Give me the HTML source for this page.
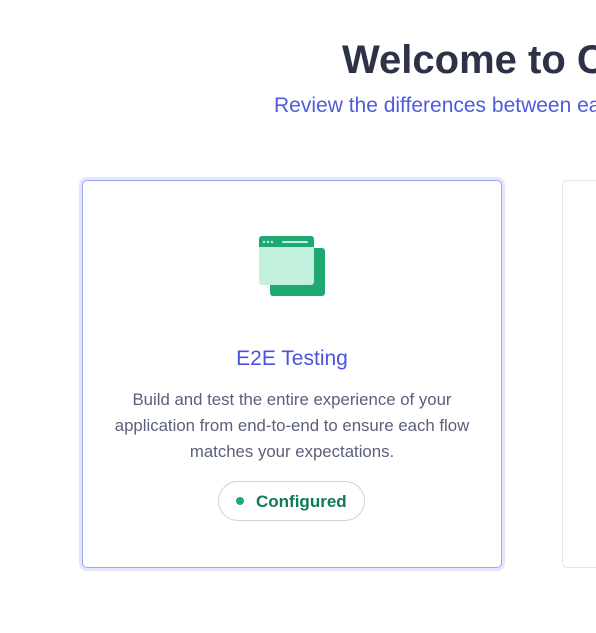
<!DOCTYPE html>
<html><head><style>
body{margin:0;width:596px;height:633px;overflow:hidden;background:#fff;font-family:"Liberation Sans",sans-serif}
#w{position:relative;width:596px;height:633px;overflow:hidden}
.t{position:absolute;white-space:nowrap}
.h{left:342px;top:38px;font-size:40px;font-weight:bold;color:#2e3247}
.s{left:274px;top:94px;font-size:21px;color:#4f5bdf}
.c1{position:absolute;left:82px;top:180px;width:418px;height:386px;border:1px solid #9ca3f5;border-radius:5px;box-shadow:0 0 0 3px #e4e6fd}
.c2{position:absolute;left:562px;top:180px;width:100px;height:386px;border:1px solid #e1e3ed;border-radius:5px}
.tt{width:420px;text-align:center;top:347px;font-size:21px;color:#4b52e0}
.d{position:absolute;left:82px;top:387px;width:420px;text-align:center;font-size:16.8px;line-height:26px;color:#5a5f7a}
.pill{position:absolute;left:218px;top:481px;width:147px;height:40px;border:1px solid #d0d0e0;border-radius:20px;box-sizing:border-box}
.dot{position:absolute;left:17px;top:15px;width:8px;height:8px;border-radius:50%;background:#1fa971}
.pl{position:absolute;left:37px;top:10px;font-size:17px;color:#0f7a55;font-weight:bold}
</style></head><body><div id="w">
<div class="t h">Welcome to Cypress!</div>
<div class="t s">Review the differences between each testing type</div>
<div class="c1"></div><div class="c2"></div>
<svg style="position:absolute;left:258px;top:235px" width="68" height="62">
<rect x="12" y="13" width="55" height="48" rx="3" fill="#1fa971"/>
<rect x="1" y="1" width="55" height="49" rx="3" fill="#c2f0dc"/>
<path d="M1 12V4a3 3 0 0 1 3-3h49a3 3 0 0 1 3 3v8z" fill="#1fa971"/>
<circle cx="6" cy="7" r="1.2" fill="#c2f0dc"/><circle cx="10" cy="7" r="1.2" fill="#c2f0dc"/><circle cx="14" cy="7" r="1.2" fill="#c2f0dc"/>
<rect x="24" y="6" width="26" height="2" rx="1" fill="#c2f0dc"/>
</svg>
<div class="t tt" style="left:82px">E2E Testing</div>
<div class="d">Build and test the entire experience of your<br>application from end-to-end to ensure each flow<br>matches your expectations.</div>
<div class="pill"><div class="dot"></div><div class="pl">Configured</div></div>
</div></body></html>
